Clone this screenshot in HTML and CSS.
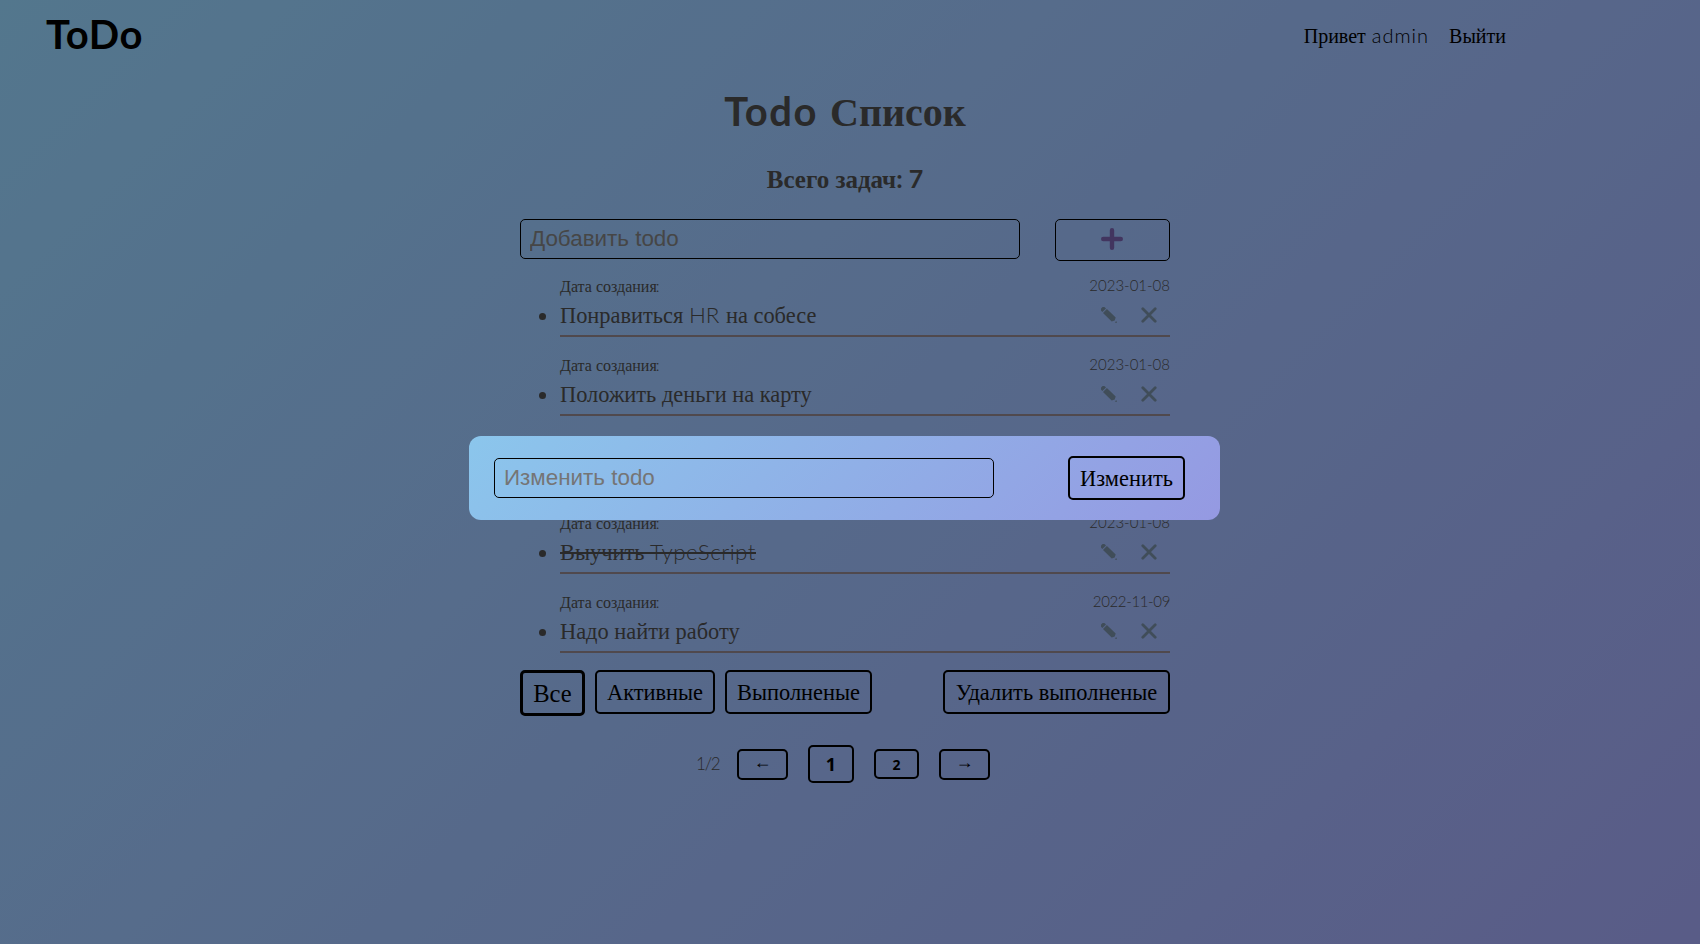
FILE: index.html
```html
<!DOCTYPE html>
<html lang="ru">
<head>
<meta charset="utf-8">
<title>ToDo</title>
<link rel="stylesheet" href="styles.css">
</head>
<body>
<svg width="0" height="0" class="sprite">
  <symbol id="pencil" viewBox="0 0 16 16"><path d="M.3 4A2.4 2.4 0 0 1 .8.8 2.4 2.4 0 0 1 4 .4l1 1L1.4 5.1zM2 5.9 5.9 2l8.8 8.6-1 2.9-3 1.1zM13.8 15.4l1.5-1.5.7 2.1z"/></symbol>
  <symbol id="cross" viewBox="0 0 16 16"><path d="M1.8 1.8l12.4 12.4M14.2 1.8L1.8 14.2" fill="none" stroke="currentColor" stroke-width="2.8" stroke-linecap="round"/></symbol>
</svg>
<header class="header">
  <a class="logo">ToDo</a>
  <nav class="nav"><span>Привет <span class="thin user">admin</span></span><a>Выйти</a></nav>
</header>
<main class="main">
  <h1 class="title"><span class="round todo">Todo</span> Список</h1>
  <h2 class="total">Всего задач<span class="round">: 7</span></h2>
  <form class="add">
    <input class="field" placeholder="Добавить todo">
    <button class="add-btn" type="button"><svg width="22" height="22" viewBox="0 0 22 22"><path d="M11 2.2v17.6M2.2 11h17.6" stroke="currentColor" stroke-width="4.4" stroke-linecap="round"/></svg></button>
  </form>
  <ul class="list">
    <li class="item"><div class="meta"><span>Дата создания<span class="thin colon">:</span></span><span class="thin date">2023-01-08</span></div><div class="row"><span class="text">Понравиться <span class="thin hr">HR</span> на собесе</span><span class="icons"><svg><use href="#pencil"/></svg><svg><use href="#cross"/></svg></span></div></li>
    <li class="item"><div class="meta"><span>Дата создания<span class="thin colon">:</span></span><span class="thin date">2023-01-08</span></div><div class="row"><span class="text">Положить деньги на карту</span><span class="icons"><svg><use href="#pencil"/></svg><svg><use href="#cross"/></svg></span></div></li>
    <li class="item"></li>
    <li class="item"><div class="meta"><span>Дата создания<span class="thin colon">:</span></span><span class="thin date">2023-01-08</span></div><div class="row"><span class="text done">Выучить <span class="thin ts">TypeScript</span></span><span class="icons"><svg><use href="#pencil"/></svg><svg><use href="#cross"/></svg></span></div></li>
    <li class="item"><div class="meta"><span>Дата создания<span class="thin colon">:</span></span><span class="thin date date-narrow">2022-11-09</span></div><div class="row"><span class="text">Надо найти работу</span><span class="icons"><svg><use href="#pencil"/></svg><svg><use href="#cross"/></svg></span></div></li>
  </ul>
  <div class="filters">
    <button class="btn btn-active">Все</button>
    <button class="btn btn-open">Активные</button>
    <button class="btn btn-done">Выполненые</button>
    <button class="btn btn-clear">Удалить выполненые</button>
  </div>
  <div class="pages">
    <span class="thin count">1/2</span>
    <button class="page arrow">←</button>
    <button class="page current">1</button>
    <button class="page">2</button>
    <button class="page arrow">→</button>
  </div>
</main>
<div class="overlay">
  <form class="modal">
    <input class="field" placeholder="Изменить todo">
    <button class="btn btn-edit" type="button">Изменить</button>
  </form>
</div>
</body>
</html>
```
FILE: styles.css
```css
* { box-sizing: border-box; }
body {
  margin: 0;
  height: 944px;
  overflow: hidden;
  background: linear-gradient(135deg, #8bc6ec 0%, #9599e2 100%);
  color: #464646;
  font-family: "Liberation Serif", serif;
}
.sprite { position: absolute; }
.thin { font-family: Lato, sans-serif; font-weight: 300; line-height: 0; }
.round { font-family: Lato, sans-serif; font-weight: 700; line-height: 0; }
.header {
  display: flex;
  justify-content: space-between;
  align-items: center;
  height: 72px;
  padding: 0 194px 0 46px;
  color: #000;
}
.logo { margin-bottom: 5px; font: 700 40px/48px Lato, sans-serif; letter-spacing: .6px; }
.nav { display: flex; gap: 20px; font-size: 20px; line-height: 24px; padding-bottom: 1px; }
.user { margin-left: 1px; letter-spacing: 1px; }
.main { width: 650px; margin-left: 520px; }
.title { margin: 16px 0 0; height: 50px; font-size: 40px; line-height: 50px; text-align: center; }
.todo { margin-right: 2px; letter-spacing: 1.5px; }
.total { margin: 27px 0 0; height: 29px; font-size: 25px; line-height: 30px; text-align: center; }
.add { display: flex; justify-content: space-between; align-items: flex-start; margin-top: 25px; }
.field {
  width: 500px;
  height: 40px;
  padding: 0 9px;
  border: 1px solid #000;
  border-radius: 5px;
  background: transparent;
  font: 22.4px "Liberation Sans", sans-serif;
}
.field::placeholder { color: #757575; }
.add-btn {
  width: 115px;
  height: 42px;
  padding: 0 1px 2px 0;
  border: 1px solid #000;
  border-radius: 5px;
  background: transparent;
  color: #6e599f;
  display: grid;
  place-items: center;
}
.list { margin: 0; padding: 0 0 0 40px; font-size: 22.4px; }
.item { position: relative; list-style: none; height: 79px; padding-top: 15px; border-bottom: 2px solid #867a80; }
.item:first-child { height: 76px; padding-top: 12px; }
.item::before {
  content: "";
  position: absolute;
  left: -21px;
  bottom: 15px;
  width: 7px;
  height: 7px;
  border-radius: 50%;
  background: #464646;
}
.meta { display: flex; justify-content: space-between; height: 24px; font-size: 16px; line-height: 27px; }
.colon { margin-left: -1px; }
.date { font-size: 15px; line-height: 25px; }
.date-narrow { letter-spacing: -.35px; }
.row { display: flex; justify-content: space-between; line-height: 37px; }
.hr { margin-right: 1px; }
.ts { letter-spacing: .5px; }
.done { position: relative; }
.done::after {
  content: "";
  position: absolute;
  left: 0;
  right: 0;
  top: 18px;
  height: 2px;
  background: #464646;
}
.icons { display: flex; gap: 24px; padding: 10px 13px 0 0; color: #6b8195; fill: #6b8195; }
.icons svg { width: 16px; height: 16px; display: block; }
.filters { display: flex; align-items: flex-start; gap: 10px; margin-top: 17px; }
.btn {
  height: 44px;
  padding: 2px 0 0;
  border: 2px solid #000;
  border-radius: 5px;
  background: transparent;
  color: #000;
  font: 22.4px "Liberation Serif", serif;
}
.btn-active { width: 65px; height: 46px; border-width: 3px; font-size: 24.6px; }
.btn-open { width: 120px; }
.btn-done { width: 147px; }
.btn-clear { width: 227px; margin-left: auto; }
.pages { display: flex; align-items: center; gap: 20px; margin: 29px 0 0 176px; height: 38px; }
.count { width: 21px; font-size: 17px; letter-spacing: -1.2px; white-space: nowrap; }
.page {
  width: 45px;
  height: 30px;
  padding: 0;
  border: 2px solid #000;
  border-radius: 5px;
  background: transparent;
  color: #000;
  font: 700 14px "Noto Sans", sans-serif;
}
.arrow { width: 51px; height: 31px; padding-bottom: 3px; font: 18px "Liberation Serif", serif; }
.current { width: 46px; height: 38px; font-size: 18px; }
.overlay {
  position: fixed;
  inset: 0;
  display: flex;
  justify-content: center;
  align-items: center;
  padding: 12px 11px 0 0;
  background: rgba(0, 0, 0, .4);
}
.modal {
  display: flex;
  justify-content: space-between;
  align-items: center;
  width: 751px;
  height: 84px;
  padding: 0 35px 0 25px;
  border-radius: 12px;
  background: linear-gradient(135deg, #8bc6ec 0%, #9599e2 100%);
}
.btn-edit { width: 117px; }
```
